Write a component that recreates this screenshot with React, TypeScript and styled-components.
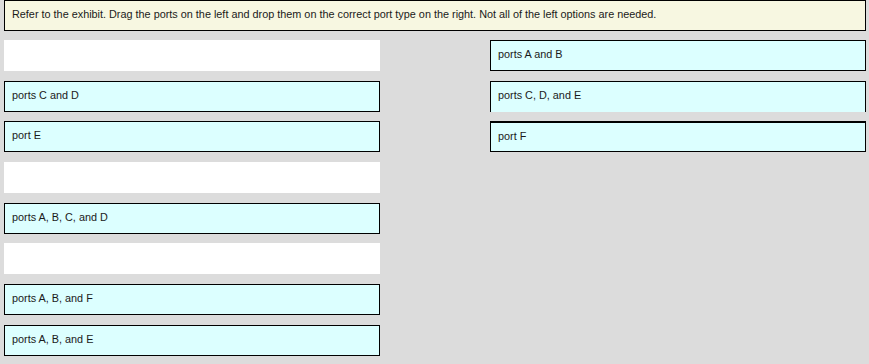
import React from 'react';
import styled, { createGlobalStyle } from 'styled-components';

const GlobalStyle = createGlobalStyle`
  html, body {
    margin: 0;
    padding: 0;
    background: #dcdcdc;
  }
  body {
    font-family: 'Liberation Sans', Arial, sans-serif;
  }
`;

const Page = styled.div`
  width: 869px;
  height: 364px;
  box-sizing: border-box;
  padding: 0 3px 0 4px;
  background: #dcdcdc;
  overflow: hidden;
`;

const Instructions = styled.div`
  height: 31px;
  box-sizing: border-box;
  border: 1px solid #000;
  background: #f7f7e1;
  display: flex;
  align-items: center;
  padding: 0 0 3px 7px;
  font-size: 10.85px;
  color: #1a1a1a;
`;

const Board = styled.div`
  display: grid;
  grid-template-columns: 376px 376px;
  column-gap: 110px;
  margin-top: 9px;
  align-items: start;
`;

const Column = styled.div`
  display: flex;
  flex-direction: column;
  gap: 9.7px;
`;

type Edge = 'normal' | 'openBottom' | 'thickTop';

const Tile = styled.div<{ $empty?: boolean; $edge?: Edge }>`
  height: 31px;
  box-sizing: border-box;
  display: flex;
  align-items: center;
  padding: 0 0 3px 7px;
  font-size: 10.85px;
  color: #1a1a1a;
  background: ${(p) => (p.$empty ? '#ffffff' : '#dcffff')};
  border: ${(p) => (p.$empty ? 'none' : '1px solid #000')};
  ${(p) => p.$edge === 'openBottom' && 'border-bottom: none;'}
  ${(p) => p.$edge === 'thickTop' && 'border-top-width: 2px;'}
`;

const leftItems: (string | null)[] = [
  null,
  'ports C and D',
  'port E',
  null,
  'ports A, B, C, and D',
  null,
  'ports A, B, and F',
  'ports A, B, and E',
];

const rightItems: { label: string; edge: Edge }[] = [
  { label: 'ports A and B', edge: 'normal' },
  { label: 'ports C, D, and E', edge: 'openBottom' },
  { label: 'port F', edge: 'thickTop' },
];

const App = (): JSX.Element => {
  return (
    <>
      <GlobalStyle />
      <Page>
        <Instructions>
          Refer to the exhibit. Drag the ports on the left and drop them on the correct port type on the right. Not all of the left options are needed.
        </Instructions>
        <Board>
          <Column>
            {leftItems.map((label, i) =>
              label ? <Tile key={i}>{label}</Tile> : <Tile key={i} $empty />
            )}
          </Column>
          <Column>
            {rightItems.map((r) => (
              <Tile key={r.label} $edge={r.edge}>
                {r.label}
              </Tile>
            ))}
          </Column>
        </Board>
      </Page>
    </>
  );
};

export default App;
